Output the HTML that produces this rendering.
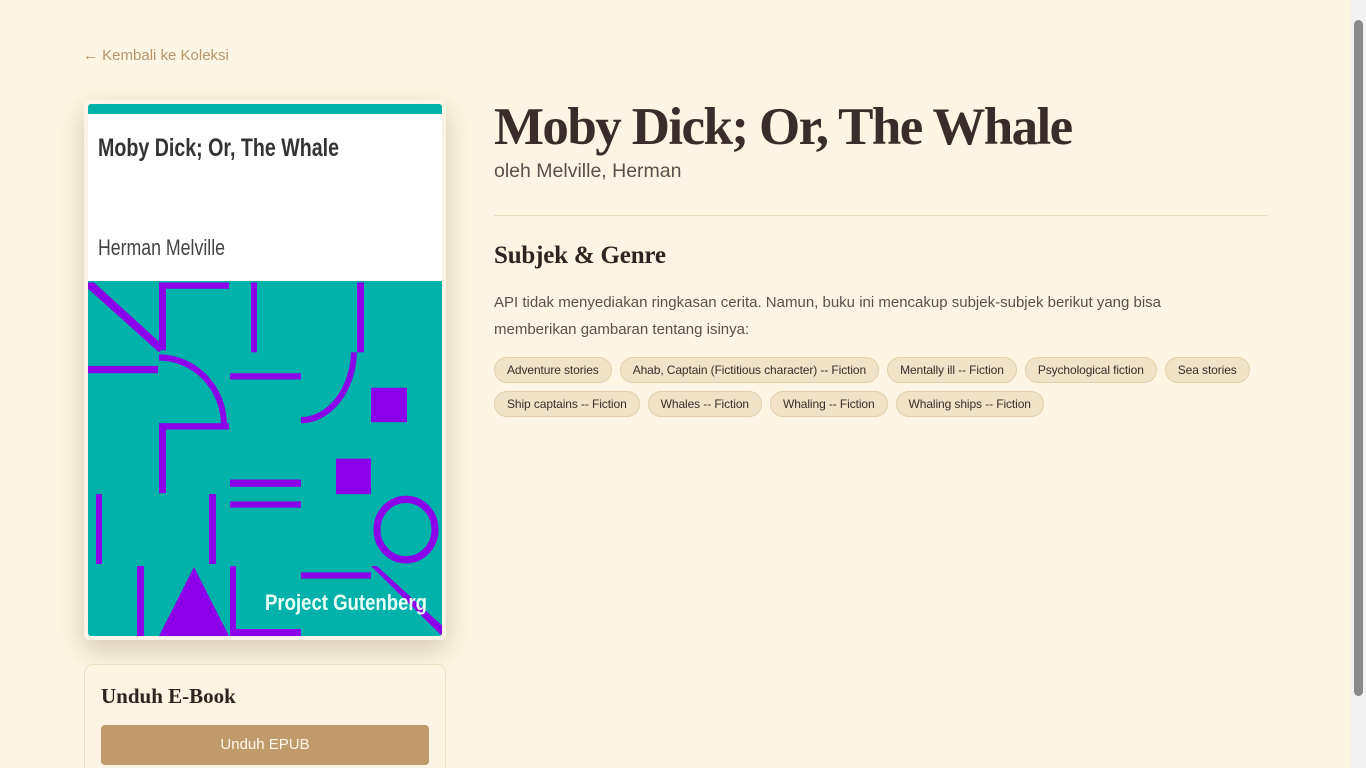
<!DOCTYPE html>
<html><head><meta charset="utf-8"><style>
*{box-sizing:border-box;margin:0;padding:0}
html,body{width:1366px;height:768px;overflow:hidden}
body{background:#fdf5e3;font-family:"Liberation Sans",sans-serif;color:#3a2d2a;position:relative}
.sb{position:absolute;right:0;top:0;width:15px;height:768px;background:#f1f1f1}
.sb div{position:absolute;left:3px;top:20px;width:9px;height:676px;background:#8a8a8a;border-radius:5px}
.back{position:absolute;left:83px;top:47px;font-size:15px;color:#b8956a}
.cover{position:absolute;left:84px;top:100px;width:362px;height:540px;background:#fbf4e6;border-radius:6px;box-shadow:0 10px 28px rgba(90,70,40,.25);padding:4px}
.cover svg{display:block;border-radius:3px}
.card{position:absolute;left:84px;top:664px;width:362px;height:120px;border:1px solid #efdfc6;border-radius:9px;background:#fcf3e2}
.card h3{position:absolute;left:16px;top:19px;font-family:"Liberation Serif",serif;font-weight:bold;font-size:21px;color:#2e2522}
.btn{position:absolute;left:16px;top:60px;width:328px;height:40px;background:#c19a6b;border-radius:4px;color:#fff8ea;font-size:15px;text-align:center;line-height:40px}
h1{position:absolute;left:494px;top:97px;font-family:"Liberation Serif",serif;font-weight:bold;font-size:53px;color:#3a2c2a;letter-spacing:-1.6px;white-space:nowrap}
.by{position:absolute;left:494px;top:160px;font-size:19.5px;color:#5d4f4a}
.hr{position:absolute;left:494px;top:215px;width:774px;height:1px;background:#ecdcc2}
h2{position:absolute;left:494px;top:242px;font-family:"Liberation Serif",serif;font-weight:bold;font-size:25px;color:#2e2522;letter-spacing:-.2px}
.p{position:absolute;left:494px;top:289px;width:700px;font-size:15px;line-height:27px;color:#5d4f4a}
.tags{position:absolute;left:494px;top:357px;width:790px;display:flex;flex-wrap:wrap;gap:8px}
.tags span{height:26px;line-height:24px;padding:0 12px;border:1px solid #e3cfa9;background:#f1e3c8;border-radius:13px;font-size:12px;color:#3a2d2a;letter-spacing:-.1px}
</style></head><body>
<div class="back">← Kembali ke Koleksi</div>
<div class="cover"><svg width="354" height="532" viewBox="0 0 354 532">
<rect width="354" height="532" fill="#00b2a9"/>
<rect y="10" width="354" height="167" fill="#fff"/>
<text x="10" y="52" font-family="Liberation Sans,sans-serif" font-weight="bold" font-size="25" fill="#333" textLength="241" lengthAdjust="spacingAndGlyphs">Moby Dick; Or, The Whale</text>
<text x="10" y="151" font-family="Liberation Sans,sans-serif" font-size="22" fill="#444" textLength="127" lengthAdjust="spacingAndGlyphs">Herman Melville</text>
<g transform="matrix(1 0 0 1.0427 0 0.17)">
<g fill="#8b00e8" stroke="none">
<polygon points="0,171 6,171 76,232 71,238 0,177"/>
<rect x="71" y="171" width="7" height="65"/><rect x="71" y="171" width="70" height="6"/>
<rect x="163" y="171" width="6" height="67"/><rect x="269" y="171" width="7" height="67"/>
<rect x="0" y="251" width="70" height="7"/>
<rect x="71" y="306" width="70" height="6"/><rect x="71" y="306" width="7" height="67"/>
<rect x="142" y="258" width="71" height="6"/>
<rect x="283" y="272" width="36" height="33"/><rect x="248" y="340" width="35" height="34"/>
<rect x="142" y="360" width="71" height="7"/><rect x="142" y="381" width="71" height="6"/>
<rect x="8" y="374" width="6" height="67"/><rect x="121" y="374" width="7" height="67"/>
<rect x="49" y="443" width="7" height="89"/><rect x="142" y="443" width="6" height="89"/>
<rect x="213" y="449" width="70" height="6"/>
<polygon points="283,443 289,443 354,500 354,510"/>
</g>
<g fill="none" stroke="#8b00e8" stroke-width="6">
<path d="M71 243 A65 65 0 0 1 136 308"/>
<path d="M266 238 A53 68 0 0 1 213 303"/>
<circle cx="318" cy="408" r="29" stroke-width="7"/>
</g>
</g>
<g fill="#8b00e8">
<rect x="142" y="525" width="71" height="7"/>
<polygon points="106,463 71,532 141,532"/>
</g>
<text x="177" y="506" font-family="Liberation Sans,sans-serif" font-weight="bold" font-size="22" fill="#e8fff8" textLength="162" lengthAdjust="spacingAndGlyphs">Project Gutenberg</text>
</svg></div>
<div class="card"><h3>Unduh E-Book</h3><div class="btn">Unduh EPUB</div></div>
<h1>Moby Dick; Or, The Whale</h1>
<div class="by">oleh Melville, Herman</div>
<div class="hr"></div>
<h2>Subjek &amp; Genre</h2>
<div class="p">API tidak menyediakan ringkasan cerita. Namun, buku ini mencakup subjek-subjek berikut yang bisa memberikan gambaran tentang isinya:</div>
<div class="tags"><span>Adventure stories</span><span>Ahab, Captain (Fictitious character) -- Fiction</span><span>Mentally ill -- Fiction</span><span>Psychological fiction</span><span>Sea stories</span><span>Ship captains -- Fiction</span><span>Whales -- Fiction</span><span>Whaling -- Fiction</span><span>Whaling ships -- Fiction</span></div>
<div class="sb"><div></div></div>
</body></html>
